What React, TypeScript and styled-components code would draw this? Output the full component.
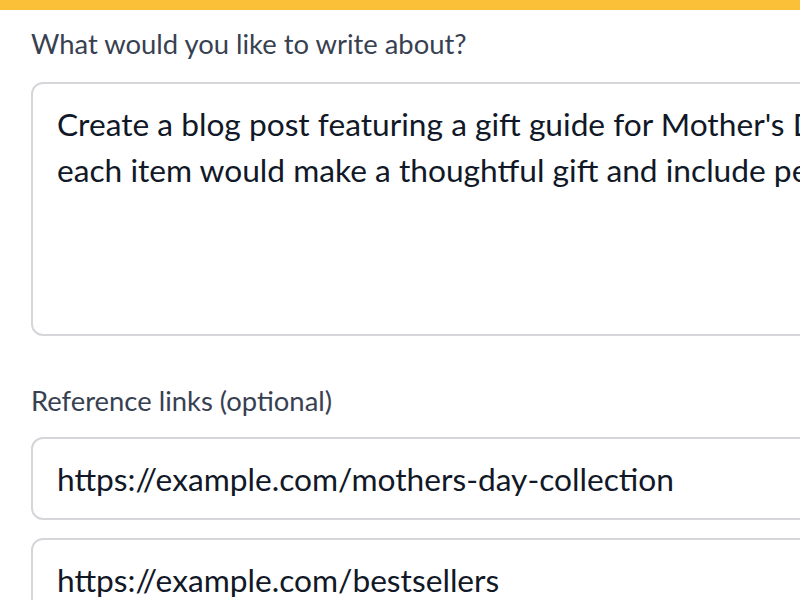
import styled, { createGlobalStyle } from 'styled-components'

const GlobalStyle = createGlobalStyle`
  html, body {
    margin: 0;
    padding: 0;
    background: #ffffff;
    overflow: hidden;
  }
  body {
    font-family: Lato, "Noto Sans", sans-serif;
  }
`

const TopBar = styled.div`
  height: 10px;
  background: #fbbf38;
`

const Page = styled.main`
  width: 1200px;
  padding: 14px 0 0 31px;
  display: flex;
  flex-direction: column;
`

const Field = styled.section<{ $labelGap: number }>`
  display: flex;
  flex-direction: column;
  gap: 18px;
  margin-bottom: 45px;

  & > label {
    margin-bottom: ${(p) => p.$labelGap - 18}px;
  }
`

const Label = styled.label`
  font-size: 27.4px;
  line-height: 40px;
  color: #374151;
`

const Box = styled.div<{ $tall?: boolean }>`
  box-sizing: border-box;
  border: 2px solid #d4d6da;
  border-radius: 12px;
  padding: ${(p) => (p.$tall ? '17px 24px' : '0 24px')};
  height: ${(p) => (p.$tall ? '254px' : '83px')};
  display: flex;
  flex-direction: column;
  justify-content: ${(p) => (p.$tall ? 'flex-start' : 'center')};
  font-size: 31.7px;
  line-height: 46px;
  color: #111827;
  white-space: pre;
  overflow: hidden;
`

const promptLines = [
  "Create a blog post featuring a gift guide for Mother's Day. Pick five",
  'each item would make a thoughtful gift and include personal touches.',
]

const links = ['https://example.com/mothers-day-collection', 'https://example.com/bestsellers']

export default function App() {
  return (
    <>
      <GlobalStyle />
      <TopBar />
      <Page>
        <Field $labelGap={18}>
          <Label>What would you like to write about?</Label>
          <Box $tall>
            {promptLines.map((line) => (
              <span key={line}>{line}</span>
            ))}
          </Box>
        </Field>
        <Field $labelGap={16}>
          <Label>Reference links (optional)</Label>
          {links.map((l) => (
            <Box key={l}>{l}</Box>
          ))}
        </Field>
      </Page>
    </>
  )
}
